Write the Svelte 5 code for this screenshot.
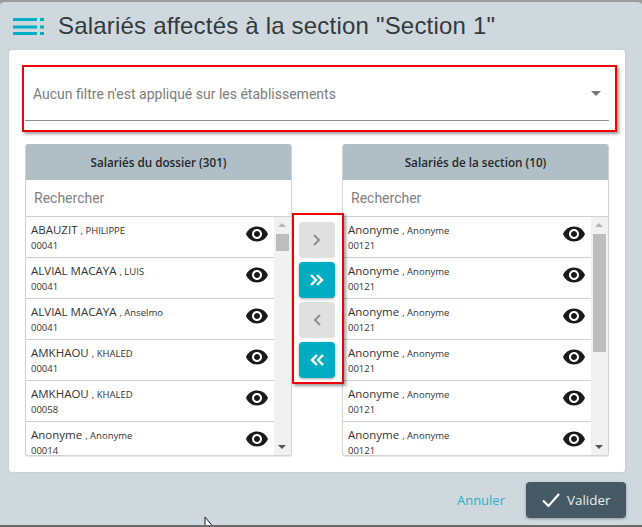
<script>
  const left = [
    { name: 'ABAUZIT', first: 'PHILIPPE', code: '00041' },
    { name: 'ALVIAL MACAYA', first: 'LUIS', code: '00041' },
    { name: 'ALVIAL MACAYA', first: 'Anselmo', code: '00041' },
    { name: 'AMKHAOU', first: 'KHALED', code: '00041' },
    { name: 'AMKHAOU', first: 'KHALED', code: '00058' },
    { name: 'Anonyme', first: 'Anonyme', code: '00014' }
  ];
  const right = Array.from({ length: 6 }, () => ({ name: 'Anonyme', first: 'Anonyme', code: '00121' }));
  const panels = [
    { title: 'Salariés du dossier (301)', rows: left, thumb: 17 },
    { title: 'Salariés de la section (10)', rows: right, thumb: 118 }
  ];
  const eye = 'M12 4.5C7 4.5 2.73 7.61 1 12c1.73 4.39 6 7.5 11 7.5s9.27-3.11 11-7.5c-1.73-4.39-6-7.5-11-7.5zM12 17c-2.76 0-5-2.24-5-5s2.24-5 5-5 5 2.24 5 5-2.24 5-5 5zm0-8c-1.66 0-3 1.34-3 3s1.34 3 3 3 3-1.34 3-3-1.34-3-3-3z';
</script>

{#snippet panel(p)}
  <section class="panel">
    <h2>{p.title}</h2>
    <div class="search">Rechercher</div>
    <div class="body">
      <ul>
        {#each p.rows as r}
          <li>
            <div class="who">
              <div class="line"><span class="name">{r.name}</span><span class="first"> , {r.first}</span></div>
              <div class="code">{r.code}</div>
            </div>
            <svg class="eye" viewBox="0 0 24 24" width="24" height="24"><path d={eye} fill="#1a1a1a" /></svg>
          </li>
        {/each}
      </ul>
      <div class="bar">
        <span class="up"></span>
        <span class="thumb" style="height:{p.thumb}px"></span>
        <span class="down"></span>
      </div>
    </div>
  </section>
{/snippet}

<div class="dialog">
  <header>
    <svg class="menu" width="31" height="18" viewBox="0 0 31 18">
      <rect x="0" y="0" width="24" height="3" /><rect x="27" y="0" width="4" height="3" />
      <rect x="0" y="7.5" width="24" height="3" /><rect x="27" y="7.5" width="4" height="3" />
      <rect x="0" y="14" width="24" height="3" /><rect x="27" y="14" width="4" height="3" />
    </svg>
    <h1>Salariés affectés à la section "Section 1"</h1>
  </header>

  <main class="card">
    <div class="marked filter">
      <div class="select">
        <span>Aucun filtre n'est appliqué sur les établissements</span>
        <i class="caret"></i>
      </div>
    </div>

    <div class="transfer">
      {@render panel(panels[0])}
      <div class="marked actions">
        <button class="off" aria-label="Ajouter"><svg width="12" height="14" viewBox="0 0 12 14"><path d="M3 2l5 5-5 5" /></svg></button>
        <button class="on" aria-label="Tout ajouter"><svg width="16" height="14" viewBox="0 0 16 14"><path d="M2 2l5 5-5 5M8 2l5 5-5 5" /></svg></button>
        <button class="off" aria-label="Retirer"><svg width="12" height="14" viewBox="0 0 12 14"><path d="M9 2L4 7l5 5" /></svg></button>
        <button class="on" aria-label="Tout retirer"><svg width="16" height="14" viewBox="0 0 16 14"><path d="M8 2L3 7l5 5M14 2L9 7l5 5" /></svg></button>
      </div>
      {@render panel(panels[1])}
    </div>
  </main>

  <footer>
    <a href="#annuler">Annuler</a>
    <button class="ok">
      <svg width="20" height="16" viewBox="0 0 20 16"><path d="M2 8.5l5.5 5.5L18 2" /></svg>
      Valider
    </button>
  </footer>

  <svg class="cursor" width="12" height="12" viewBox="0 0 12 12"><path d="M1 0v12h10z" fill="#fff" stroke="#222" /></svg>
</div>

<style>
  :global(body) { margin: 0; background: #9c9c9c; }
  .dialog {
    position: relative;
    box-sizing: border-box;
    width: 642px;
    height: 527px;
    overflow: hidden;
    background: #cfd8dd;
    border-top: 2px solid #9c9c9c;
    border-bottom: 2px solid #6b6b6b;
    border-radius: 5px 5px 0 0;
    font-family: "Liberation Sans", Arial, sans-serif;
  }
  header {
    display: flex;
    align-items: center;
    height: 48px;
    padding-left: 13px;
    gap: 14px;
  }
  .menu { fill: #00afc6; margin-top: 1px; }
  h1 {
    margin: 0;
    font-size: 24px;
    font-weight: 400;
    color: #333a3e;
    letter-spacing: 0.2px;
  }
  .card {
    width: 616px;
    height: 422px;
    margin-left: 9px;
    box-sizing: border-box;
    padding: 15px 8px 0 13px;
    background: #fff;
    border-radius: 3px;
    box-shadow: 0 0 2px rgba(0,0,0,.12);
  }
  .marked {
    box-sizing: border-box;
    border: 2px solid #f00000;
    box-shadow: 2px 2px 3px rgba(0,0,0,.4);
  }
  .filter { height: 67px; padding: 0 6px 9px 1px; display: flex; }
  .select {
    flex: 1;
    display: flex;
    align-items: center;
    justify-content: space-between;
    padding: 0 8px;
    border-bottom: 1px solid #8f8f8f;
    font-family: Roboto, sans-serif;
    font-size: 14px;
    color: #7d7d7d;
  }
  .caret {
    width: 0; height: 0;
    border-left: 5px solid transparent;
    border-right: 5px solid transparent;
    border-top: 5px solid #777;
  }
  .transfer {
    display: grid;
    grid-template-columns: 267px 52px 267px;
    margin: 12px 0 0 3px;
  }
  .panel {
    box-sizing: border-box;
    width: 267px;
    height: 312px;
    display: flex;
    flex-direction: column;
    border-radius: 3px;
    border: 1px solid #d4d4d4;
    border-top: 0;
    overflow: hidden;
    box-shadow: 0 1px 1px rgba(0,0,0,.1);
  }
  .panel:last-child { margin-left: -2px; }
  h2 {
    margin: 0 -1px;
    height: 36px;
    line-height: 36px;
    flex: none;
    background: #b0bec5;
    text-align: center;
    font-family: "Open Sans", sans-serif;
    font-size: 11.7px;
    font-weight: 600;
    color: #24282b;
  }
  .search {
    flex: none;
    height: 36px;
    line-height: 36px;
    padding-left: 8px;
    border-bottom: 1px solid #cfcfcf;
    font-family: Roboto, sans-serif;
    font-size: 14px;
    color: #808080;
  }
  .body { flex: 1; display: flex; min-height: 0; }
  ul { flex: 1; margin: 0; padding: 0; list-style: none; overflow: hidden; }
  li {
    box-sizing: border-box;
    height: 41px;
    display: flex;
    justify-content: space-between;
    padding: 5px 5px 0 5px;
    border-bottom: 1px solid #cfcfcf;
    font-family: "Open Sans", sans-serif;
    color: #333;
  }
  .line { font-size: 11.5px; line-height: 16px; white-space: pre; }
  .first { font-size: 9.5px; margin-left: 3px; }
  .code { font-size: 9.5px; line-height: 14px; }
  .eye { margin-top: 0; }
  .bar {
    position: relative;
    flex: none;
    width: 17px;
    background: #f1f1f1;
    box-sizing: border-box;
    padding-top: 17px;
    display: flex;
    flex-direction: column;
    align-items: center;
  }
  .thumb { width: 13px; background: #bdbdbd; }
  .up, .down {
    position: absolute;
    left: 4px;
    width: 0; height: 0;
    border-left: 4px solid transparent;
    border-right: 4px solid transparent;
  }
  .up { top: 6px; border-bottom: 4px solid #b5b5b5; }
  .down { bottom: 6px; border-top: 4px solid #555; }
  .actions {
    box-sizing: border-box;
    width: 52px;
    height: 171px;
    margin-top: 69px;
    padding: 7px 0 0 5px;
    display: flex;
    flex-direction: column;
    gap: 4px;
    z-index: 1;
    background: #fff;
  }
  .actions button {
    width: 36px;
    height: 36px;
    padding: 0;
    border: 0;
    border-radius: 4px;
    display: flex;
    align-items: center;
    justify-content: center;
  }
  .actions svg { fill: none; stroke-width: 2; }
  .off { background: #e0e0e0; }
  .off svg { stroke: #8f8f8f; }
  .on { background: #00acc1; box-shadow: 0 1px 3px rgba(0,0,0,.35); }
  .on svg { stroke: #fff; stroke-width: 2.4; }
  footer {
    display: flex;
    align-items: center;
    justify-content: flex-end;
    gap: 21px;
    width: 626px;
    margin-top: 10px;
  }
  a {
    font-family: "Open Sans", sans-serif;
    font-size: 13px;
    color: #1fb2c9;
    text-decoration: none;
  }
  .ok {
    box-sizing: border-box;
    width: 100px;
    height: 36px;
    display: flex;
    align-items: center;
    gap: 6px;
    padding: 0 0 0 15px;
    border: 0;
    border-radius: 4px;
    background: #455a64;
    box-shadow: 0 1px 3px rgba(0,0,0,.3);
    color: #e8eef0;
    font-family: "Open Sans", sans-serif;
    font-size: 13.4px;
  }
  .ok svg { fill: none; stroke: #fff; stroke-width: 2.2; }
  .cursor { position: absolute; left: 204px; top: 515px; }
</style>
